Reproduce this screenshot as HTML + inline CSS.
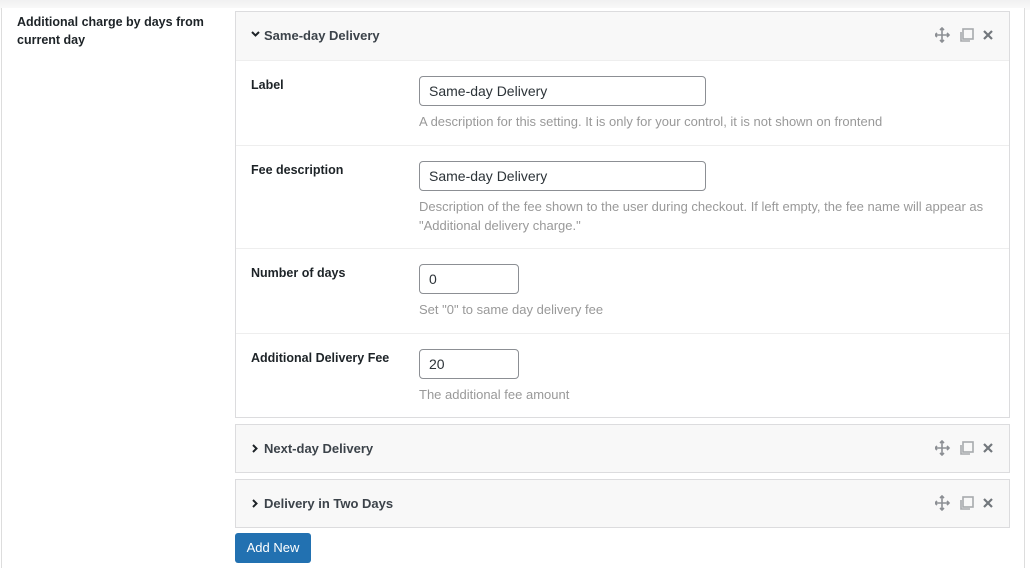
<!DOCTYPE html>
<html><head><style>
*{box-sizing:border-box;margin:0;padding:0}
body{width:1030px;height:564px;overflow:hidden;background:#fff;font-family:"Liberation Sans",sans-serif;color:#1d2327;position:relative}
.top{position:absolute;left:0;top:0;width:1030px;height:10px;background:linear-gradient(#f0f0f1,#fafafa)}
.panel{position:absolute;left:1px;top:8px;width:1024px;height:560px;background:#fff;border-left:1px solid #ddd;border-right:1px solid #ddd}
.ttl{position:absolute;left:17px;top:13px;font-size:12.5px;font-weight:bold;line-height:18px;color:#1d2327}
.box{position:absolute;left:235px;width:775px;border:1px solid #dcdcde;background:#fff}
.hd{height:48px;background:#f8f8f8;position:relative;font-size:13px;font-weight:bold;color:#3c434a}
.hd .t{position:absolute;left:28px;top:16px}
.hd .cv{position:absolute;left:15px;top:19px}
.ic{position:absolute;right:12px;top:15px;width:62px;height:16px}
.row{position:relative;border-top:1px solid #eee}
.row .l{position:absolute;left:15px;font-size:12.5px;font-weight:bold}
.row .in{position:absolute;left:183px;height:30px;border:1px solid #8c8f94;border-radius:4px;font-size:14px;padding:6px 9px;color:#2c3338}
.row .d{position:absolute;left:183px;font-size:13px;color:#999;line-height:19px;width:580px}
.btn{position:absolute;left:235px;top:533px;width:76px;height:30px;background:#2271b1;border-radius:3px;color:#fff;font-size:13px;text-align:center;line-height:30px}
</style></head><body>
<div class="top"></div>
<div class="panel"></div>
<div class="ttl">Additional charge by days from<br>current day</div>

<svg width="0" height="0" style="position:absolute"><defs>
<g id="icons" fill="none" stroke="#8c8f94" stroke-width="1.6">
<path d="M7 1v14M0 8h14M5 3l2-2 2 2M5 13l2 2 2-2M2 6l-2 2 2 2M12 6l2 2-2 2"/>
<rect x="28" y="2" width="10" height="10" stroke="#a7aaad"/>
<path d="M26 5v9h9" stroke="#a7aaad"/>
<path d="M49 4l8 8M57 4l-8 8" stroke="#72777c" stroke-width="2.2"/>
</g>
<path id="dn" d="M1 1l3.5 3.5L8 1" fill="none" stroke="#1d2327" stroke-width="2"/>
<path id="rt" d="M1 1l3.5 3.5L1 8" fill="none" stroke="#1d2327" stroke-width="2"/>
</defs></svg>

<div class="box" style="top:11px;height:407px">
 <div class="hd"><svg class="cv" width="10" height="8"><use href="#dn"/></svg><span class="t">Same-day Delivery</span><svg class="ic" viewBox="0 0 62 16"><use href="#icons"/></svg></div>
 <div class="row" style="height:85px"><span class="l" style="top:17px">Label</span><div class="in" style="top:15px;width:287px">Same-day Delivery</div><div class="d" style="top:51px">A description for this setting. It is only for your control, it is not shown on frontend</div></div>
 <div class="row" style="height:103px"><span class="l" style="top:17px">Fee description</span><div class="in" style="top:15px;width:287px">Same-day Delivery</div><div class="d" style="top:51px">Description of the fee shown to the user during checkout. If left empty, the fee name will appear as "Additional delivery charge."</div></div>
 <div class="row" style="height:85px"><span class="l" style="top:17px">Number of days</span><div class="in" style="top:15px;width:100px">0</div><div class="d" style="top:51px">Set "0" to same day delivery fee</div></div>
 <div class="row" style="height:84px"><span class="l" style="top:17px">Additional Delivery Fee</span><div class="in" style="top:15px;width:100px">20</div><div class="d" style="top:51px">The additional fee amount</div></div>
</div>
<div class="box" style="top:424px"><div class="hd" style="height:47px"><svg class="cv" width="8" height="10" style="top:19px;left:16px"><use href="#rt"/></svg><span class="t">Next-day Delivery</span><svg class="ic" viewBox="0 0 62 16"><use href="#icons"/></svg></div></div>
<div class="box" style="top:479px"><div class="hd" style="height:47px"><svg class="cv" width="8" height="10" style="top:19px;left:16px"><use href="#rt"/></svg><span class="t">Delivery in Two Days</span><svg class="ic" viewBox="0 0 62 16"><use href="#icons"/></svg></div></div>
<div class="btn">Add New</div>
</body></html>
